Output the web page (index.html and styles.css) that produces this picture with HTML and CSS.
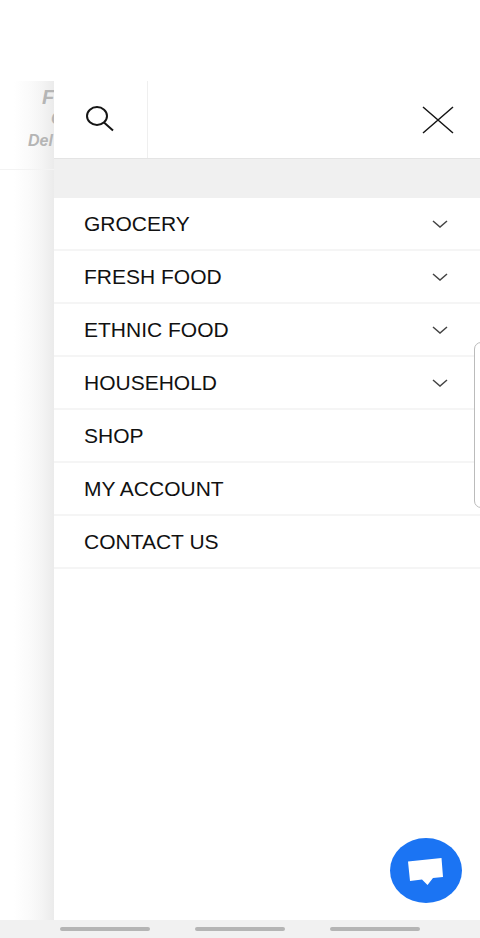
FILE: index.html
```html
<!DOCTYPE html>
<html lang="en">
<head>
<meta charset="utf-8">
<meta name="viewport" content="width=device-width, initial-scale=1">
<title>Menu</title>
<link rel="stylesheet" href="styles.css">
</head>
<body>
<div class="screen">
  <div class="status-bar"></div>
  <main class="content">
    <div class="backdrop">
      <div class="logo">
        <span class="logo-first">F</span>
        <span class="logo-second">C</span>
        <span class="logo-third">Del</span>
      </div>
    </div>
    <div class="drawer">
      <header class="drawer-header">
        <button class="search" type="button" aria-label="Search">
          <svg width="28" height="26" viewBox="0 0 28 26"><ellipse cx="11" cy="10" rx="10" ry="9"/><path d="M18 16.500L27 24.500"/></svg>
        </button>
        <button class="close" type="button" aria-label="Close menu">
          <svg width="32" height="28" viewBox="0 0 32 28"><path d="M1 1L31 27M31 1L1 27"/></svg>
        </button>
      </header>
      <div class="band"></div>
      <nav class="menu" aria-label="Main">
        <a href="#grocery">GROCERY <svg class="chevron" viewBox="0 0 16 8"><path d="M1 1L8 7L15 1"/></svg></a>
        <a href="#fresh">FRESH FOOD <svg class="chevron" viewBox="0 0 16 8"><path d="M1 1L8 7L15 1"/></svg></a>
        <a href="#ethnic">ETHNIC FOOD <svg class="chevron" viewBox="0 0 16 8"><path d="M1 1L8 7L15 1"/></svg></a>
        <a href="#household">HOUSEHOLD <svg class="chevron" viewBox="0 0 16 8"><path d="M1 1L8 7L15 1"/></svg></a>
        <a href="#shop">SHOP</a>
        <a href="#account">MY ACCOUNT</a>
        <a href="#contact">CONTACT US</a>
      </nav>
    </div>
  </main>
  <footer class="system-bar"><i></i><i></i><i></i></footer>
  <div class="edge-handle"></div>
  <button class="chat" type="button" aria-label="Open chat">
    <svg width="72" height="65" viewBox="0 0 72 65"><ellipse cx="36" cy="32.500" rx="36" ry="32.500" fill="#1b74f3"/><path d="M18 23.500L51.500 20L53 39L43 40L37.500 47L32 41.500L20 43Z" fill="#fff"/></svg>
  </button>
</div>
</body>
</html>
```
FILE: styles.css
```css
* { box-sizing: border-box; }
body {
  margin: 0;
  background: #fff;
  color: #111;
  font-family: "Liberation Sans", Arial, sans-serif;
}
button {
  padding: 0;
  border: 0;
  background: none;
}
svg { display: block; }
.screen {
  position: relative;
  display: flex;
  flex-direction: column;
  min-height: 100vh;
  overflow: hidden;
}
.status-bar { height: 81px; }
.content {
  display: flex;
  flex: 1;
}
.backdrop {
  width: 54px;
  overflow: hidden;
  background: linear-gradient(to right, #fff 14px, #fafafa 30px, #f4f4f4 42px, #ebebeb);
}
.logo {
  display: flex;
  flex-direction: column;
  height: 89px;
  padding-top: 4px;
  border-bottom: 1px solid #f3f3f3;
  color: #b5b5b5;
  font-style: italic;
  font-weight: bold;
  white-space: nowrap;
}
.logo-first {
  padding-left: 42px;
  font-size: 20px;
  line-height: 24px;
}
.logo-second {
  padding-left: 51px;
  font-size: 16px;
  line-height: 20px;
}
.logo-third {
  padding-left: 28px;
  font-size: 16px;
  line-height: 24px;
}
.drawer {
  flex: 1;
  background: #fff;
}
.drawer-header {
  display: flex;
  justify-content: space-between;
  height: 77px;
}
.drawer-header svg {
  fill: none;
  stroke: #151515;
}
.search {
  display: flex;
  align-items: center;
  padding: 0 33px 2px 32px;
  border-right: 1px solid #efefef;
}
.search svg { stroke-width: 2; }
.close {
  display: flex;
  align-items: center;
  padding: 0 26px;
}
.close svg { stroke-width: 1.500; }
.band {
  height: 40px;
  border-top: 1px solid #e4e4e4;
  background: #f0f0f0;
}
.menu a {
  display: flex;
  align-items: center;
  justify-content: space-between;
  height: 53px;
  padding: 0 32px 0 30px;
  border-bottom: 2px solid #f5f5f5;
  color: #111;
  font-size: 21px;
  text-decoration: none;
}
.chevron {
  width: 16px;
  height: 8px;
  fill: none;
  stroke: #444;
  stroke-width: 1.500;
}
.system-bar {
  display: flex;
  align-items: center;
  justify-content: space-between;
  height: 18px;
  padding: 0 60px;
  background: #f1f1f1;
}
.system-bar i {
  width: 90px;
  height: 4px;
  border-radius: 2px;
  background: #b5b5b5;
}
.edge-handle {
  position: absolute;
  top: 342px;
  right: -8px;
  width: 14px;
  height: 166px;
  border: 1px solid #bbb;
  border-radius: 8px;
  background: #fff;
}
.chat {
  position: absolute;
  right: 18px;
  bottom: 35px;
}
```
